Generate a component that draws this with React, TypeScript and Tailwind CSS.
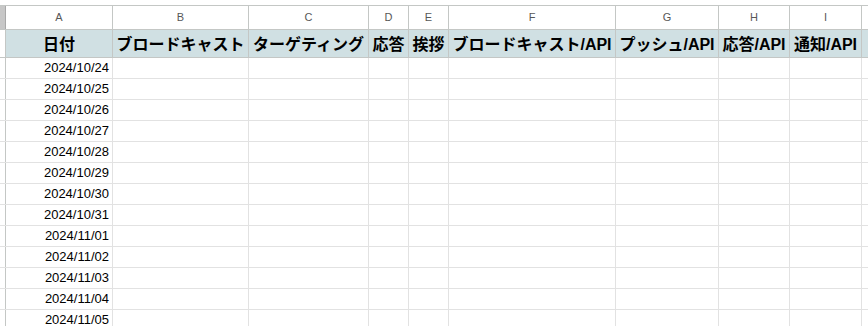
import React from "react";

type Col = { letter: string; width: string; title: string };

const COLS: Col[] = [
  { letter: "A", width: "w-[107px]", title: "日付" },
  { letter: "B", width: "w-[136px]", title: "ブロードキャスト" },
  { letter: "C", width: "w-[120px]", title: "ターゲティング" },
  { letter: "D", width: "w-[40px]", title: "応答" },
  { letter: "E", width: "w-[40px]", title: "挨拶" },
  { letter: "F", width: "w-[167px]", title: "ブロードキャスト/API" },
  { letter: "G", width: "w-[103px]", title: "プッシュ/API" },
  { letter: "H", width: "w-[71px]", title: "応答/API" },
  { letter: "I", width: "w-[72px]", title: "通知/API" },
  { letter: "", width: "w-[60px]", title: "" }
];

const DATES = [
  "2024/10/24",
  "2024/10/25",
  "2024/10/26",
  "2024/10/27",
  "2024/10/28",
  "2024/10/29",
  "2024/10/30",
  "2024/10/31",
  "2024/11/01",
  "2024/11/02",
  "2024/11/03",
  "2024/11/04",
  "2024/11/05"
];

const font = "font-['Liberation_Sans','Noto_Sans_CJK_JP',sans-serif]";

export default function App() {
  return (
    <div className={`h-[326px] w-[868px] overflow-hidden bg-white pt-[5px] ${font}`}>
      {/* column letters */}
      <div className="flex h-[25px] border-y border-[#c4c7c5]">
        <div className="w-[6px] shrink-0 border-r border-[#a8a8a8] bg-[#c7c7c7]" />
        {COLS.map((c, i) => (
          <div
            key={i}
            className={`${c.width} flex shrink-0 items-center justify-center border-r border-[#c4c7c5] text-[11px] text-[#575757]`}
          >
            {c.letter}
          </div>
        ))}
      </div>

      {/* title row */}
      <div className="flex h-[28px] border-b border-[#c4c7c5]">
        <div className="w-[6px] shrink-0 border-r border-[#c4c7c5] bg-white" />
        {COLS.map((c, i) => (
          <div
            key={i}
            className={`${c.width} flex shrink-0 items-end justify-center overflow-hidden whitespace-nowrap border-r border-[#c4c7c5] bg-[#d0e0e3] pb-[2px] text-[16px] leading-[20px] font-bold text-black`}
          >
            {c.title}
          </div>
        ))}
      </div>

      {/* data rows */}
      {DATES.map((d) => (
        <div key={d} className="flex h-[21px] border-b border-[#e2e2e2]">
          <div className="w-[6px] shrink-0 border-r border-[#c4c7c5] bg-white" />
          {COLS.map((c, i) => (
            <div
              key={i}
              className={`${c.width} flex shrink-0 items-center justify-end border-r border-[#e2e2e2] pr-[3px] text-[13px] leading-[16px] text-black`}
            >
              {i === 0 ? d : ""}
            </div>
          ))}
        </div>
      ))}
    </div>
  );
}
